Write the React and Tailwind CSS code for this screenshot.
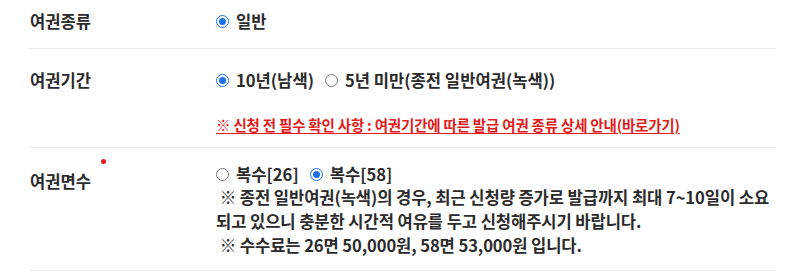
import React from 'react'

const Radio = ({ checked }) =>
  checked ? (
    <span className="inline-flex items-center justify-center w-[13px] h-[13px] rounded-full border-[1.5px] border-[#1a73e8] bg-white shrink-0">
      <span className="w-[7px] h-[7px] rounded-full bg-[#1a73e8]" />
    </span>
  ) : (
    <span className="inline-block w-[13px] h-[13px] rounded-full border border-[#767676] bg-white shrink-0" />
  )

const Option = ({ checked, label, last }) => (
  <label className={`inline-flex items-center gap-[7px] ${last ? '' : 'mr-[11px]'}`}>
    <Radio checked={checked} />
    <span>{label}</span>
  </label>
)

const Row = ({ label, required, className, labelClass, children }) => (
  <div className={`flex border-b border-[#ececec] ${className}`}>
    <div className={`w-[187px] shrink-0 ${labelClass}`}>
      <span className="relative inline-block">
        {label}
        {required && (
          <span className="absolute -right-[15px] -top-[10px] w-[5px] h-[5px] rounded-full bg-[#e21b1b]" />
        )}
      </span>
    </div>
    <div className="flex-1">{children}</div>
  </div>
)

export default function App() {
  return (
    <div
      className="w-[800px] h-[274px] bg-white text-[16.6px] leading-[24px] text-[#2b2b2b] font-semibold"
      style={{ fontFamily: '"Noto Sans CJK KR", "Noto Sans", sans-serif' }}
    >
      <div className="ml-[29px] w-[747px]">
        <Row label="여권종류" className="h-[49px] pt-[9px]" labelClass="pl-[1px]">
          <div className="flex items-center">
            <Option checked label="일반" last />
          </div>
        </Row>

        <Row label="여권기간" className="h-[99px] pt-[19px]" labelClass="pl-[1px]">
          <div className="flex items-center">
            <Option checked label="10년(남색)" />
            <Option label="5년 미만(종전 일반여권(녹색))" last />
          </div>
          <a
            href="#"
            className="block mt-[21px] text-[14.5px] font-bold text-[#e21b1b] underline underline-offset-2 tracking-[-0.2px]"
          >
            ※ 신청 전 필수 확인 사항 : 여권기간에 따른 발급 여권 종류 상세 안내(바로가기)
          </a>
        </Row>

        <Row
          label="여권면수"
          required
          className="h-[123px] pt-[15px]"
          labelClass="pl-[1px] pt-[6px]"
        >
          <div className="flex items-center h-[22px]">
            <Option label="복수[26]" />
            <Option checked label="복수[58]" last />
          </div>
          <p className="tracking-[-0.1px]">
            &nbsp;※ 종전 일반여권(녹색)의 경우, 최근 신청량 증가로 발급까지 최대 7~10일이 소요
            <br />
            되고 있으니 충분한 시간적 여유를 두고 신청해주시기 바랍니다.
            <br />
            &nbsp;※ 수수료는 26면 50,000원, 58면 53,000원 입니다.
          </p>
        </Row>
      </div>
    </div>
  )
}
